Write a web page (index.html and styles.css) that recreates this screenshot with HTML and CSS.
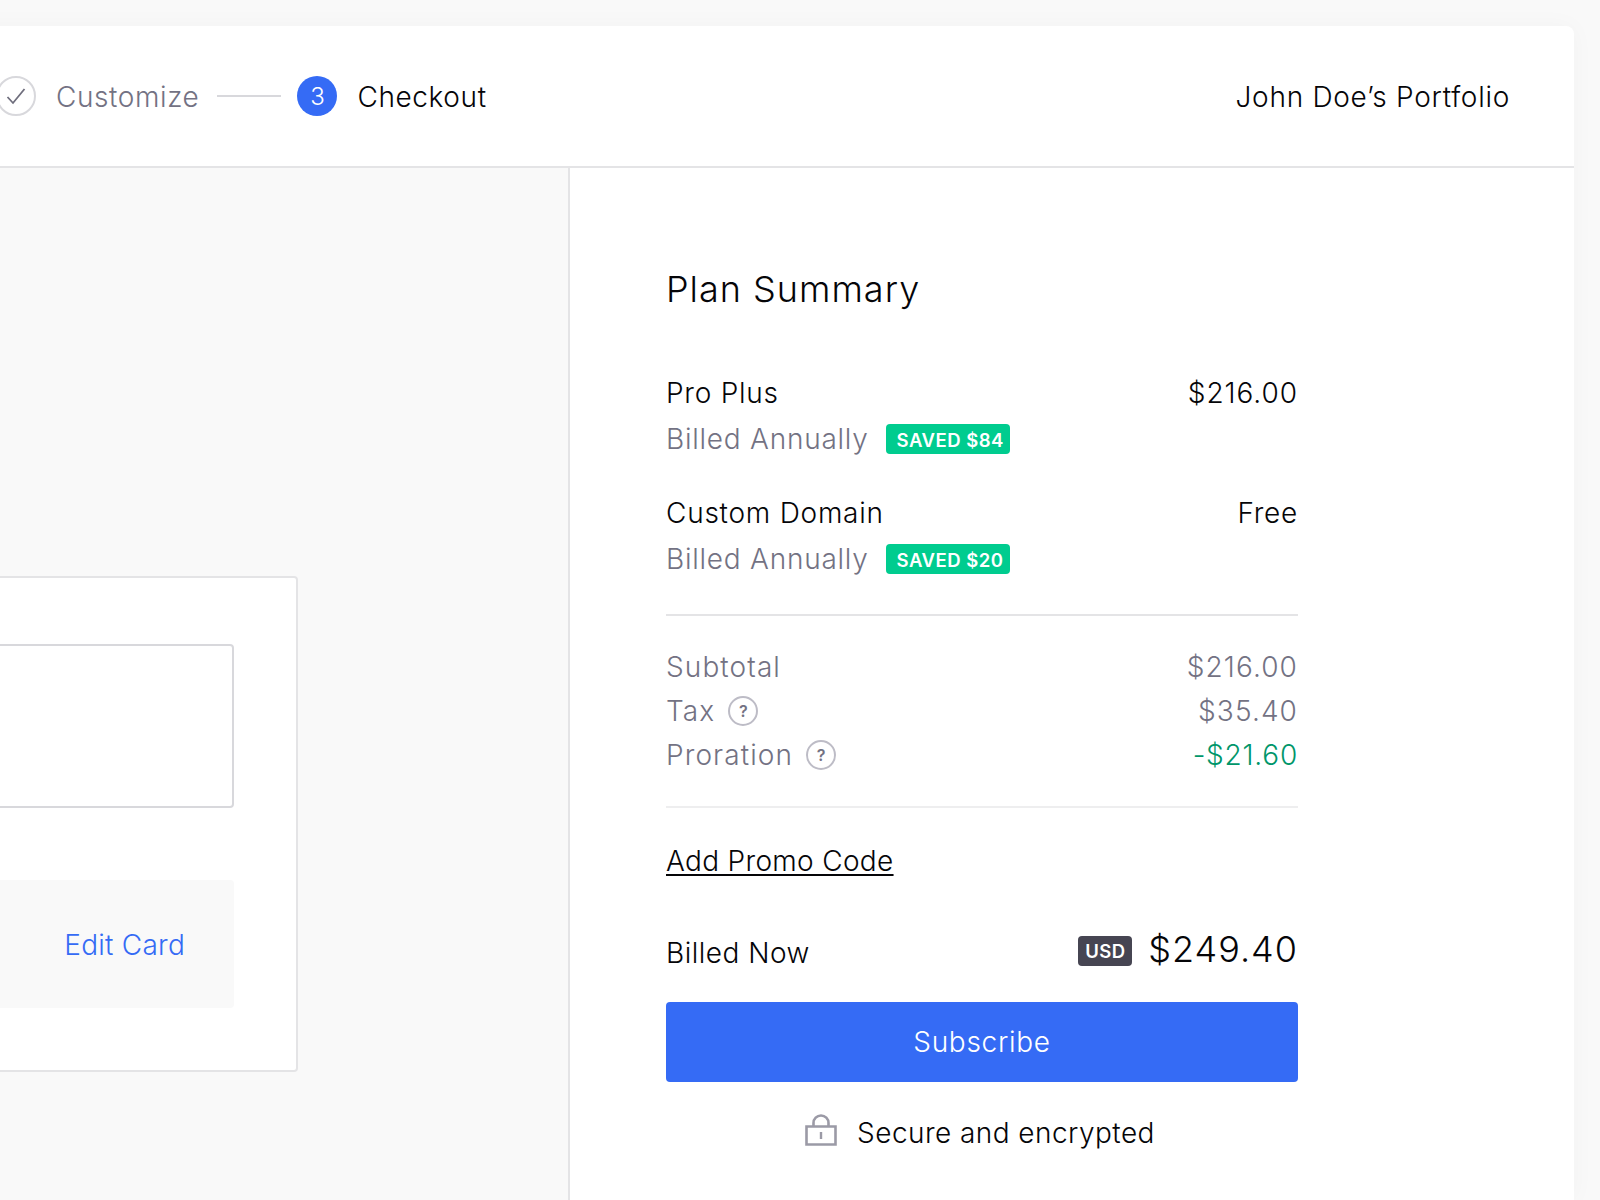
FILE: index.html
```html
<!DOCTYPE html>
<html lang="en">
<head>
<meta charset="utf-8">
<title>Checkout</title>
<link rel="stylesheet" href="styles.css">
</head>
<body>
<div class="window">
  <header class="topbar">
    <div class="steps">
      <span class="step-circle done">
        <svg class="check" viewBox="0 0 24 24" width="24" height="24"><path d="M3.5 13 L9 19 L20.5 5" fill="none" stroke="#6f6e7d" stroke-width="1.8"/></svg>
      </span>
      <span class="step-label muted">Customize</span>
      <span class="step-line"></span>
      <span class="step-circle current">3</span>
      <span class="step-label">Checkout</span>
    </div>
    <div class="site-name">John Doe’s Portfolio</div>
  </header>
  <div class="content">
    <section class="left">
      <div class="card">
        <div class="input-box"></div>
        <div class="saved-card"><a class="edit-link">Edit Card</a></div>
      </div>
    </section>
    <aside class="summary">
      <h2 class="summary-title">Plan Summary</h2>
      <div class="items">
        <div class="row"><span>Pro Plus</span><span class="amount">$216.00</span></div>
        <div class="row muted"><span class="with-badge">Billed Annually<span class="badge">SAVED $84</span></span></div>
        <div class="row item-gap"><span>Custom Domain</span><span>Free</span></div>
        <div class="row muted"><span class="with-badge">Billed Annually<span class="badge">SAVED $20</span></span></div>
      </div>
      <div class="totals">
        <div class="total-row"><span>Subtotal</span><span>$216.00</span></div>
        <div class="total-row"><span class="with-help">Tax<span class="help">?</span></span><span>$35.40</span></div>
        <div class="total-row"><span class="with-help">Proration<span class="help">?</span></span><span class="credit">-$21.60</span></div>
      </div>
      <a class="promo">Add Promo Code</a>
      <div class="billed">
        <span class="billed-label">Billed Now</span>
        <span class="billed-amount"><span class="currency">USD</span><span class="price">$249.40</span></span>
      </div>
      <button class="subscribe" type="button">Subscribe</button>
      <div class="secure">
        <svg class="lock" viewBox="0 0 32 32" width="32" height="32"><path d="M1.5 12.5 H30.5 V30.5 H1.5 Z" fill="none" stroke="#9b9aa6" stroke-width="2.6"/><path d="M8.5 12 V9 a7.5 7.5 0 0 1 15 0 V12" fill="none" stroke="#9b9aa6" stroke-width="2.6"/><path d="M16 18 V25" stroke="#9b9aa6" stroke-width="2.4"/></svg>
        <span>Secure and encrypted</span>
      </div>
    </aside>
  </div>
</div>
</body>
</html>
```
FILE: styles.css
```css
* { box-sizing: border-box; }
html, body { margin: 0; height: 100%; overflow: hidden; }
body {
  background: #f9f9f9;
  font-family: Inter, "Liberation Sans", sans-serif;
  font-size: 28px;
  color: #050508;
  font-weight: 360;
}
.window {
  margin: 26px 26px 0 -400px;
  height: 1174px;
  background: #fff;
  border-radius: 8px 8px 0 0;
  box-shadow: 0 0 24px rgba(0, 0, 0, 0.03);
  overflow: hidden;
}
.topbar {
  height: 142px;
  border-bottom: 2px solid #e4e4e6;
  display: flex;
  align-items: center;
  justify-content: space-between;
  padding: 0 64px 0 396px;
}
.steps { display: flex; align-items: center; }
.step-circle {
  width: 40px;
  height: 40px;
  border-radius: 50%;
  display: flex;
  align-items: center;
  justify-content: center;
  flex: none;
}
.step-circle.done { border: 2px solid #d8d8dc; }
.step-circle.current { background: #356bf5; color: #fff; font-size: 24px; font-weight: 300; }
.check { display: block; }
.step-label { margin-left: 20px; padding-top: 2px; letter-spacing: 0.6px; }
.muted { color: #737283; }
.step-line { width: 64px; height: 2px; background: #d8d8dc; margin: 0 16px 0 18px; }
.site-name { padding-top: 2px; letter-spacing: 0.72px; }
.content { display: flex; }
.left {
  width: 970px;
  height: 1032px;
  background: #f9f9f9;
  border-right: 2px solid #e4e4e6;
  display: flex;
  justify-content: flex-end;
  padding: 408px 270px 0 0;
}
.card {
  width: 800px;
  height: 496px;
  background: #fff;
  border: 2px solid #e4e4e6;
  border-radius: 4px;
  padding: 66px 62px 0 0;
}
.input-box {
  height: 164px;
  border: 2px solid #d8d8dc;
  border-radius: 4px;
}
.saved-card {
  margin-top: 72px;
  height: 128px;
  background: #f9f9f9;
  border-radius: 4px;
  display: flex;
  align-items: center;
  justify-content: flex-end;
  padding: 2px 49px 0 0;
}
.edit-link { color: #356bf5; letter-spacing: 0.25px; }
.summary { width: 632px; margin-left: 96px; padding-top: 99px; }
.summary-title { margin: 0; font-size: 36px; line-height: 44px; font-weight: 360; letter-spacing: 1px; }
.items { margin-top: 59px; padding-bottom: 32px; border-bottom: 2px solid #e4e4e6; }
.row { display: flex; justify-content: space-between; line-height: 46px; letter-spacing: 0.76px; }
.amount { letter-spacing: 0.95px; }
.item-gap { margin-top: 28px; }
.with-badge { display: flex; align-items: center; }
.badge {
  margin-left: 17px;
  width: 124px;
  height: 30px;
  line-height: 32px;
  padding-left: 11px;
  border-radius: 4px;
  background: #00cc8f;
  color: #fff;
  font-size: 18.5px;
  font-weight: 600;
  letter-spacing: 0.5px;
}
.totals { padding: 29px 0 29px; border-bottom: 2px solid #eeeeef; color: #737283; }
.total-row { display: flex; justify-content: space-between; line-height: 44px; letter-spacing: 1.1px; }
.with-help { display: flex; align-items: center; }
.help {
  margin-left: 13px;
  width: 30px;
  height: 30px;
  border: 2px solid #bdbcc6;
  border-radius: 50%;
  display: flex;
  align-items: center;
  justify-content: center;
  font-size: 16px;
  font-weight: 600;
  letter-spacing: 0;
}
.credit { color: #00966a; letter-spacing: 0.78px; }
.promo { display: block; margin-top: 30px; line-height: 46px; text-decoration: underline; text-decoration-thickness: 2px; text-underline-offset: 3px; letter-spacing: 0.32px; }
.billed { display: flex; justify-content: space-between; align-items: center; margin-top: 45px; height: 44px; letter-spacing: 0.5px; }
.billed-label { margin-top: 4px; }
.billed-amount { display: flex; align-items: center; }
.currency {
  width: 54px;
  height: 30px;
  line-height: 31px;
  text-align: center;
  background: #464552;
  color: #fff;
  border-radius: 4px;
  font-size: 18.5px;
  font-weight: 600;
  letter-spacing: 0.4px;
}
.price { margin: 0 0 4px 16px; font-size: 36px; letter-spacing: 1px; }
.subscribe {
  display: block;
  width: 632px;
  height: 80px;
  margin-top: 29px;
  padding-top: 0;
  border: 0;
  border-radius: 4px;
  background: #356bf5;
  color: #fff;
  font: inherit;
  letter-spacing: 0.7px;
}
.secure { display: flex; align-items: center; justify-content: center; margin-top: 33px; padding-right: 4px; height: 36px; letter-spacing: 0.45px; }
.lock { margin: -6px 20px 0 0; }
```
